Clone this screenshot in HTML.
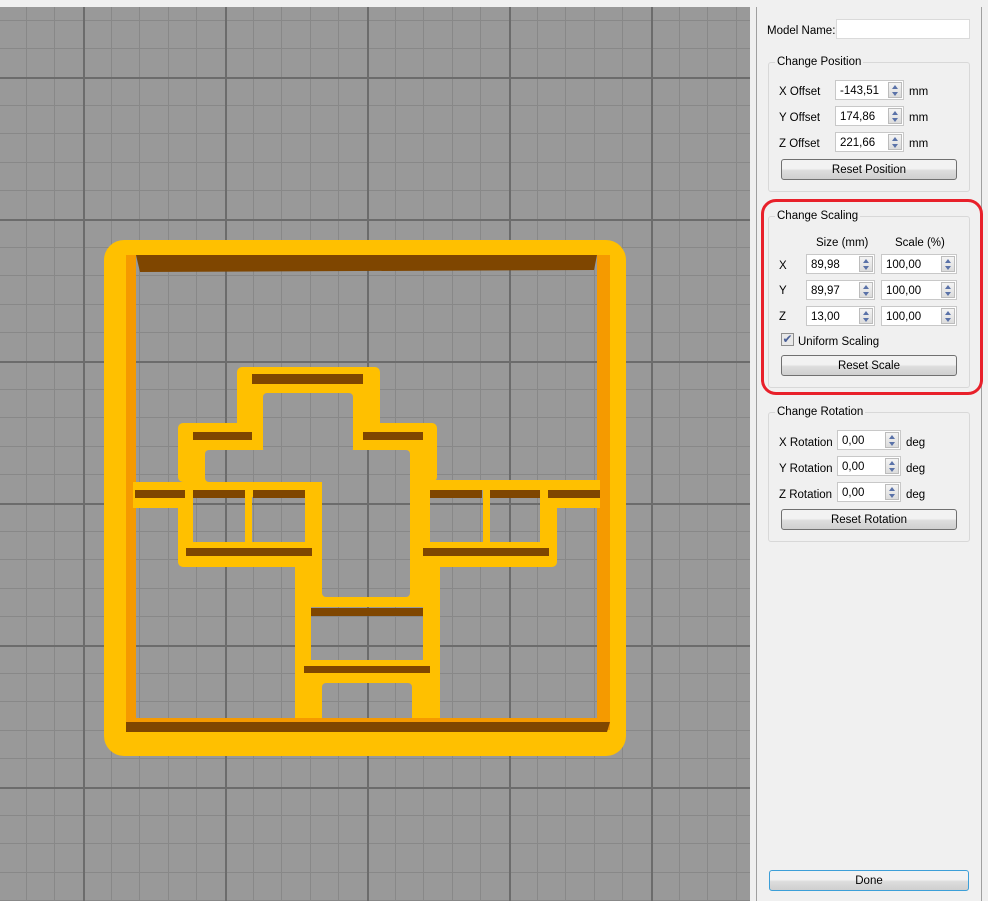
<!DOCTYPE html>
<html><head><meta charset="utf-8"><style>
body{margin:0;width:988px;height:901px;background:#f0f0f0;position:relative;overflow:hidden;font-family:"Liberation Sans",sans-serif;font-size:11.5px;color:#000}
.a{position:absolute;white-space:nowrap;margin-top:2px}
.inp{position:absolute;background:#fff;border:1px solid #c8c8c8;box-sizing:border-box}
.spin{position:absolute;background:#fff;border:1px solid #c8c8c8;box-sizing:border-box;height:20px}
.spin span{position:absolute;left:4px;top:4px}
.spin i{position:absolute;right:1px;top:1px;width:14px;height:16px;background:linear-gradient(#f4f4f4,#dcdcdc);border:1px solid #bcbcbc;box-sizing:border-box}
.spin i:before{content:"";position:absolute;left:3px;top:2px;border:3px solid transparent;border-bottom:4px solid #5a72a8;border-top:0}
.spin i:after{content:"";position:absolute;left:3px;top:9px;border:3px solid transparent;border-top:4px solid #5a72a8;border-bottom:0}
.grp{position:absolute;border:1px solid #d8d8d8;border-radius:3px;box-sizing:border-box}
.grp b{position:absolute;top:-7px;left:6px;background:#f0f0f0;padding:0 2px;font-weight:normal}
.btn{position:absolute;border:1px solid #707070;border-radius:3px;background:linear-gradient(#f2f2f2 45%,#dddddd 55%,#cfcfcf);box-sizing:border-box;text-align:center;line-height:21px}
</style></head><body>
<svg class="a" style="left:0;top:7px;margin-top:0" width="750" height="894" viewBox="0 7 750 894">
<defs>
<pattern id="g" patternUnits="userSpaceOnUse" x="-59" y="-65" width="142" height="142">
<rect width="142" height="142" fill="#999"/>
<g fill="#888"><rect x="28" width="1" height="142"/><rect x="56" width="1" height="142"/><rect x="85" width="1" height="142"/><rect x="113" width="1" height="142"/>
<rect y="28" width="142" height="1"/><rect y="56" width="142" height="1"/><rect y="85" width="142" height="1"/><rect y="113" width="142" height="1"/></g>
<g fill="#6c6c6c"><rect x="0" width="2" height="142"/><rect y="0" width="142" height="2"/></g>
</pattern>
</defs>
<rect x="0" y="7" width="750" height="894" fill="url(#g)"/>
<rect x="104" y="240" width="522" height="516" rx="20" fill="#ffc000"/>
<rect x="126" y="255" width="484" height="475" fill="#f59a00"/>
<rect x="136" y="255" width="461" height="465" fill="url(#g)"/>
<g fill="#ffc000">
<rect x="237" y="367" width="143" height="83" rx="5"/>
<rect x="178" y="423" width="259" height="59" rx="5"/>
<rect x="133" y="482" width="189" height="26"/>
<rect x="178" y="482" width="144" height="85" rx="5"/>
<rect x="295" y="482" width="145" height="240"/>
<rect x="423" y="480" width="134" height="87" rx="5"/>
<rect x="540" y="480" width="60" height="28"/>
</g>
<g fill="url(#g)">
<rect x="263" y="393" width="90" height="60" rx="4"/>
<rect x="205" y="450" width="205" height="32" rx="4"/>
<rect x="322" y="470" width="88" height="127" rx="4"/>
<rect x="193" y="497" width="52" height="45"/>
<rect x="252" y="497" width="53" height="45"/>
<rect x="311" y="607" width="112" height="53"/>
<rect x="322" y="683" width="90" height="40" rx="4"/>
<rect x="430" y="490" width="53" height="52"/>
<rect x="490" y="490" width="50" height="52"/>
</g>
<g fill="#7f4600">
<polygon points="136,255 597,255 594,270 140,272"/>
<rect x="252" y="374" width="111" height="10"/>
<rect x="193" y="432" width="59" height="8"/>
<rect x="363" y="432" width="60" height="8"/>
<rect x="135" y="490" width="50" height="8"/>
<rect x="193" y="490" width="52" height="8"/>
<rect x="253" y="490" width="52" height="8"/>
<rect x="186" y="548" width="126" height="8"/>
<rect x="430" y="490" width="52" height="8"/>
<rect x="490" y="490" width="50" height="8"/>
<rect x="548" y="490" width="52" height="8"/>
<rect x="423" y="548" width="126" height="8"/>
<rect x="311" y="608" width="112" height="8"/>
<rect x="304" y="666" width="126" height="7"/>
<polygon points="126,722 610,722 607,732 126,732"/>
</g>
<rect x="126" y="718" width="484" height="4" fill="#f59a00"/>
</svg>
<div class="a" style="left:756px;top:7px;width:1px;height:894px;background:#a0a0a0;margin-top:0"></div>
<div class="a" style="left:981px;top:7px;width:1px;height:894px;background:#a0a0a0;margin-top:0"></div>

<div class="a" style="left:767px;top:23px">Model Name:</div>
<div class="inp" style="left:836px;top:19px;width:134px;height:20px;border-color:#dadada"></div>

<div class="grp" style="left:768px;top:62px;width:202px;height:130px"><b>Change Position</b></div>
<div class="a" style="left:779px;top:84px">X Offset</div>
<div class="spin" style="left:835px;top:80px;width:69px"><span>-143,51</span><i></i></div>
<div class="a" style="left:909px;top:84px">mm</div>
<div class="a" style="left:779px;top:110px">Y Offset</div>
<div class="spin" style="left:835px;top:106px;width:69px"><span>174,86</span><i></i></div>
<div class="a" style="left:909px;top:110px">mm</div>
<div class="a" style="left:779px;top:136px">Z Offset</div>
<div class="spin" style="left:835px;top:132px;width:69px"><span>221,66</span><i></i></div>
<div class="a" style="left:909px;top:136px">mm</div>
<div class="btn" style="left:781px;top:159px;width:176px;height:21px">Reset Position</div>

<div class="a" style="left:761px;top:199px;width:222px;height:196px;border:3px solid #e8202a;border-radius:15px;box-sizing:border-box;margin-top:0"></div>
<div class="grp" style="left:768px;top:216px;width:202px;height:172px"><b>Change Scaling</b></div>
<div class="a" style="left:816px;top:235px">Size (mm)</div>
<div class="a" style="left:895px;top:235px">Scale (%)</div>
<div class="a" style="left:779px;top:258px">X</div>
<div class="spin" style="left:806px;top:254px;width:69px"><span>89,98</span><i></i></div>
<div class="spin" style="left:881px;top:254px;width:76px"><span>100,00</span><i></i></div>
<div class="a" style="left:779px;top:283px">Y</div>
<div class="spin" style="left:806px;top:280px;width:69px"><span>89,97</span><i></i></div>
<div class="spin" style="left:881px;top:280px;width:76px"><span>100,00</span><i></i></div>
<div class="a" style="left:779px;top:309px">Z</div>
<div class="spin" style="left:806px;top:306px;width:69px"><span>13,00</span><i></i></div>
<div class="spin" style="left:881px;top:306px;width:76px"><span>100,00</span><i></i></div>
<div class="a" style="left:781px;top:333px;width:13px;height:13px;border:1px solid #8f8f8f;box-sizing:border-box;background:#e8e8e8;color:#4a5f96;font-size:12px;line-height:11px;text-align:center;margin-top:0">✔</div>
<div class="a" style="left:798px;top:334px">Uniform Scaling</div>
<div class="btn" style="left:781px;top:355px;width:176px;height:21px">Reset Scale</div>

<div class="grp" style="left:768px;top:412px;width:202px;height:130px"><b>Change Rotation</b></div>
<div class="a" style="left:779px;top:435px">X Rotation</div>
<div class="spin" style="left:837px;top:430px;width:64px"><span>0,00</span><i></i></div>
<div class="a" style="left:906px;top:435px">deg</div>
<div class="a" style="left:779px;top:461px">Y Rotation</div>
<div class="spin" style="left:837px;top:456px;width:64px"><span>0,00</span><i></i></div>
<div class="a" style="left:906px;top:461px">deg</div>
<div class="a" style="left:779px;top:487px">Z Rotation</div>
<div class="spin" style="left:837px;top:482px;width:64px"><span>0,00</span><i></i></div>
<div class="a" style="left:906px;top:487px">deg</div>
<div class="btn" style="left:781px;top:509px;width:176px;height:21px">Reset Rotation</div>

<div class="btn" style="left:769px;top:870px;width:200px;height:21px;border-color:#3c9fd8">Done</div>
</body></html>
